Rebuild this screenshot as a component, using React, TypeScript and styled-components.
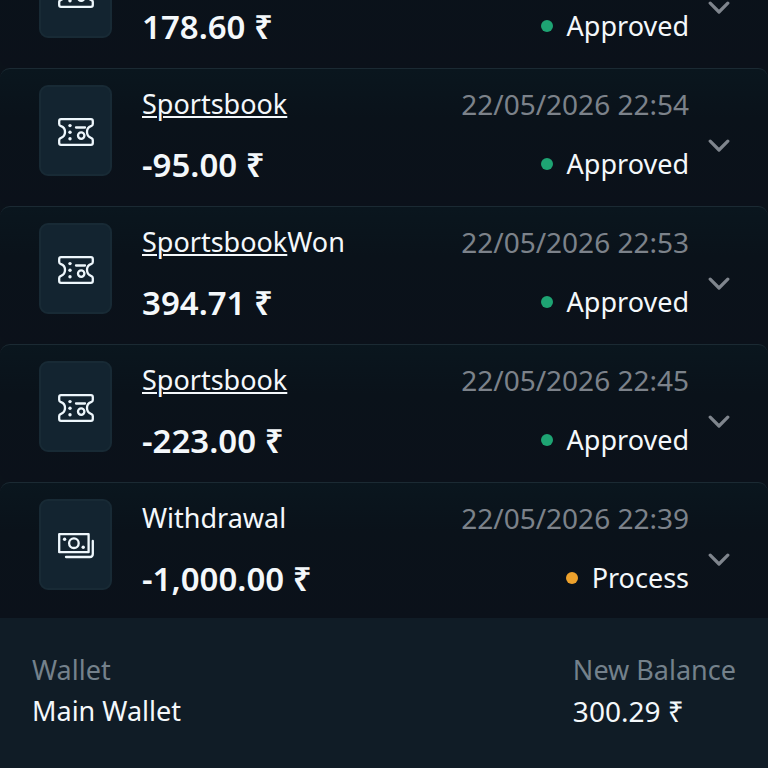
import React from "react";
import styled, { createGlobalStyle } from "styled-components";

const GlobalStyle = createGlobalStyle`
  * { box-sizing: border-box; }
  body {
    margin: 0;
    background: #0b121a;
    color: #f4f8fb;
    font-family: "Noto Sans", "Open Sans", sans-serif;
    font-size: 27px;
    line-height: 36px;
  }
`;

const Screen = styled.main`
  display: flex;
  flex-direction: column;
  justify-content: flex-end;
  height: 100vh;
  overflow: hidden;
`;

const List = styled.ul`
  flex: none;
  margin: 0;
  padding: 0;
  list-style: none;
`;

const Row = styled.li`
  display: flex;
  align-items: flex-start;
  min-height: 138px;
  padding: 16px 32px 16px 39px;
  border-top: 1px solid #1b2a33;
  border-radius: 10px;
  background: linear-gradient(#0a161e, #0a121a 36%, #0b111a);

  &:last-child {
    min-height: 136px;
    border-bottom-left-radius: 0;
    border-bottom-right-radius: 0;
  }
`;

const Tile = styled.div`
  display: flex;
  flex: none;
  align-items: center;
  justify-content: center;
  width: 73px;
  height: 91px;
  padding-top: 3px;
  border: 2px solid #182a35;
  border-radius: 9px;
  background: #132430;
  color: #eef7fc;
`;

const Info = styled.div`
  display: flex;
  flex: 1;
  flex-direction: column;
  gap: 23px;
  min-width: 0;
  padding-top: 1px;
  padding-left: 30px;
  white-space: nowrap;
`;

const Side = styled(Info)`
  flex: none;
  align-items: flex-end;
  gap: 22px;
`;

const Title = styled.div`
  min-height: 36px;
`;

const TitleLink = styled.a`
  color: inherit;
  text-decoration: underline;
  text-decoration-thickness: 2px;
  text-underline-offset: 2px;
  text-decoration-skip-ink: auto;
`;

const Amount = styled.div`
  font-size: 33px;
  font-weight: 600;
  line-height: 40px;
`;

const DateTime = styled.time`
  min-height: 36px;
  color: #7c828a;
  font-size: 28px;
`;

const Status = styled.div`
  display: flex;
  align-items: center;
  gap: 14px;
  line-height: 40px;
`;

const Dot = styled.span<{ $color: string }>`
  width: 12px;
  height: 12px;
  border-radius: 50%;
  background: ${(p) => p.$color};
`;

const Toggle = styled.button`
  display: flex;
  flex: none;
  align-items: center;
  justify-content: center;
  width: 34px;
  height: 32px;
  margin-top: 45px;
  margin-left: 13px;
  padding: 0;
  border: 0;
  background: none;
  color: #7f858d;
  cursor: pointer;
`;

const Details = styled.dl`
  display: flex;
  flex: none;
  justify-content: space-between;
  min-height: 150px;
  margin: 0;
  padding: 34px 32px;
  background: #101c26;
`;

const Label = styled.dt`
  color: #74818b;
`;

const Value = styled.dd<{ $numeric?: boolean }>`
  margin: 5px 0 0;
  font-size: ${(p) => (p.$numeric ? "28px" : "27px")};
`;

const TicketIcon = () => (
  <svg width="36" height="28" viewBox="0 0 36 28" fill="none" stroke="currentColor" strokeWidth="2.3" aria-hidden="true">
    <path
      d="M3 1.2H33Q34.8 1.2 34.8 3V6Q34.8 7.6 33 8.2A6.2 6.2 0 0 0 33 19.8Q34.8 20.4 34.8 22V25Q34.8 26.8 33 26.8H3Q1.2 26.8 1.2 25V22Q1.2 20.4 3 19.8A6.2 6.2 0 0 0 3 8.2Q1.2 7.6 1.2 6V3Q1.2 1.2 3 1.2Z"
      strokeLinejoin="round"
    />
    <path d="M18 9.5H27" strokeLinecap="round" />
    <circle cx="23.2" cy="17.6" r="3.2" />
    <g fill="currentColor" stroke="none">
      <circle cx="12" cy="7.6" r="1.7" />
      <circle cx="12" cy="14.2" r="1.7" />
      <circle cx="12" cy="20.8" r="1.7" />
    </g>
  </svg>
);

const CashIcon = () => (
  <svg width="36" height="28" viewBox="0 0 36 28" fill="none" stroke="currentColor" strokeWidth="2.3" aria-hidden="true">
    <path d="M1.2 2.2H30.6V20.2H1.2Z" strokeLinejoin="round" />
    <circle cx="15.9" cy="11.2" r="4.8" />
    <circle cx="6.6" cy="7.2" r="1.7" fill="currentColor" stroke="none" />
    <circle cx="25.2" cy="15.2" r="1.7" fill="currentColor" stroke="none" />
    <path d="M8 25H31.8Q34.8 25 34.8 22V9" strokeLinecap="round" />
  </svg>
);

const Chevron = () => (
  <svg width="22" height="14" viewBox="0 0 22 14" fill="none" stroke="currentColor" strokeWidth="3.2" aria-hidden="true">
    <path d="M2.2 2.2L11 11L19.8 2.2" strokeLinecap="round" strokeLinejoin="round" />
  </svg>
);

type Transaction = {
  kind: "bet" | "cash";
  link?: string;
  text?: string;
  amount: string;
  date?: string;
  status: "Approved" | "Process";
};

const transactions: Transaction[] = [
  { kind: "bet", amount: "178.60 ₹", status: "Approved" },
  { kind: "bet", link: "Sportsbook", amount: "-95.00 ₹", date: "22/05/2026 22:54", status: "Approved" },
  { kind: "bet", link: "Sportsbook", text: "Won", amount: "394.71 ₹", date: "22/05/2026 22:53", status: "Approved" },
  { kind: "bet", link: "Sportsbook", amount: "-223.00 ₹", date: "22/05/2026 22:45", status: "Approved" },
  { kind: "cash", text: "Withdrawal", amount: "-1,000.00 ₹", date: "22/05/2026 22:39", status: "Process" },
];

const statusColors = { Approved: "#1ea473", Process: "#eda12c" };

export default function App() {
  return (
    <>
      <GlobalStyle />
      <Screen>
        <List>
          {transactions.map((t, i) => (
            <Row key={i}>
              <Tile>{t.kind === "bet" ? <TicketIcon /> : <CashIcon />}</Tile>
              <Info>
                <Title>
                  {t.link && <TitleLink href="#sportsbook">{t.link}</TitleLink>}
                  {t.text}
                </Title>
                <Amount>{t.amount}</Amount>
              </Info>
              <Side>
                <DateTime>{t.date}</DateTime>
                <Status>
                  <Dot $color={statusColors[t.status]} />
                  {t.status}
                </Status>
              </Side>
              <Toggle type="button" aria-label="Details" aria-expanded={t.kind === "cash"}>
                <Chevron />
              </Toggle>
            </Row>
          ))}
        </List>
        <Details>
          <div>
            <Label>Wallet</Label>
            <Value>Main Wallet</Value>
          </div>
          <div>
            <Label>New Balance</Label>
            <Value $numeric>300.29 ₹</Value>
          </div>
        </Details>
      </Screen>
    </>
  );
}
